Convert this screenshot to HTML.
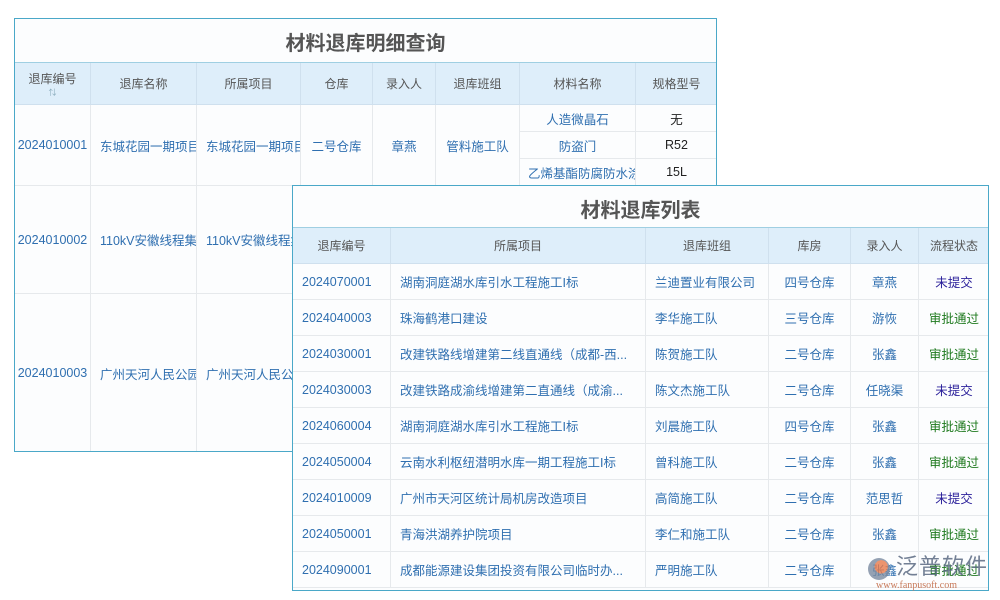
<!DOCTYPE html>
<html><head><meta charset="utf-8"><style>
*{margin:0;padding:0;box-sizing:border-box}
body{width:1000px;height:600px;background:#fff;position:relative;overflow:hidden;font-family:"Liberation Sans","Noto Sans CJK SC",sans-serif;font-size:12px}
.p{position:absolute;border:1px solid #4aa8c8;background:#fcfdfe;overflow:hidden}
.t{position:absolute;left:0;right:0;text-align:center;font-weight:bold;color:#555;font-size:20px}
.c{position:absolute;display:flex;align-items:center;justify-content:center;white-space:nowrap;overflow:hidden;border-right:1px solid #e6e9ec;border-bottom:1px solid #e6e9ec;color:#2f6fb0;font-size:12.5px}
.h{background:#deeefa;color:#555;border-color:#cfe0ee;font-size:12px}
.l{justify-content:flex-start;padding-left:9px}
.g{color:#1f7a1f}.u{color:#2a1f9a}.k{color:#222}
</style></head><body>
<div class="p" style="left:14px;top:18px;width:703px;height:434px">
<div class="t" style="top:8px">材料退库明细查询</div>
<div style="position:absolute;left:0;right:0;top:43px;height:1px;background:#9fcfe2"></div>
<div class="c h" style="left:0;top:44px;width:76px;height:42px;flex-direction:column">退库编号<span style="font-size:8px;color:#8ab">⇅</span></div>
<div class="c h" style="left:76px;top:44px;width:106px;height:42px">退库名称</div>
<div class="c h" style="left:182px;top:44px;width:104px;height:42px">所属项目</div>
<div class="c h" style="left:286px;top:44px;width:72px;height:42px">仓库</div>
<div class="c h" style="left:358px;top:44px;width:63px;height:42px">录入人</div>
<div class="c h" style="left:421px;top:44px;width:84px;height:42px">退库班组</div>
<div class="c h" style="left:505px;top:44px;width:116px;height:42px">材料名称</div>
<div class="c h" style="left:621px;top:44px;width:82px;height:42px">规格型号</div>

<div class="c" style="left:0;top:86px;width:76px;height:81px">2024010001</div>
<div class="c l" style="left:76px;top:86px;width:106px;height:81px">东城花园一期项目</div>
<div class="c l" style="left:182px;top:86px;width:104px;height:81px">东城花园一期项目</div>
<div class="c" style="left:286px;top:86px;width:72px;height:81px">二号仓库</div>
<div class="c" style="left:358px;top:86px;width:63px;height:81px">章燕</div>
<div class="c" style="left:421px;top:86px;width:84px;height:81px">管料施工队</div>
<div class="c" style="left:505px;top:86px;width:116px;height:27px">人造微晶石</div>
<div class="c k" style="left:621px;top:86px;width:82px;height:27px">无</div>
<div class="c" style="left:505px;top:113px;width:116px;height:27px">防盗门</div>
<div class="c k" style="left:621px;top:113px;width:82px;height:27px">R52</div>
<div class="c l" style="left:505px;top:140px;width:116px;height:27px;padding-left:8px">乙烯基酯防腐防水涂</div>
<div class="c k" style="left:621px;top:140px;width:82px;height:27px">15L</div>

<div class="c" style="left:0;top:167px;width:76px;height:108px">2024010002</div>
<div class="c l" style="left:76px;top:167px;width:106px;height:108px">110kV安徽线程集团</div>
<div class="c l" style="left:182px;top:167px;width:104px;height:108px">110kV安徽线程集团</div>
<div class="c" style="left:286px;top:167px;width:72px;height:108px"></div>
<div class="c" style="left:358px;top:167px;width:63px;height:108px"></div>
<div class="c" style="left:421px;top:167px;width:84px;height:108px"></div>
<div class="c" style="left:505px;top:167px;width:116px;height:108px"></div>

<div class="c" style="left:0;top:275px;width:76px;height:159px">2024010003</div>
<div class="c l" style="left:76px;top:275px;width:106px;height:159px">广州天河人民公园</div>
<div class="c l" style="left:182px;top:275px;width:104px;height:159px">广州天河人民公园</div>
</div>

<div class="p" style="left:292px;top:185px;width:697px;height:406px">
<div class="t" style="top:8px">材料退库列表</div>
<div style="position:absolute;left:0;right:0;top:41px;height:1px;background:#9fcfe2"></div>
<div class="c h" style="left:0;top:42px;width:98px;height:36px">退库编号</div>
<div class="c h" style="left:98px;top:42px;width:255px;height:36px">所属项目</div>
<div class="c h" style="left:353px;top:42px;width:123px;height:36px">退库班组</div>
<div class="c h" style="left:476px;top:42px;width:82px;height:36px">库房</div>
<div class="c h" style="left:558px;top:42px;width:68px;height:36px">录入人</div>
<div class="c h" style="left:626px;top:42px;width:71px;height:36px">流程状态</div>
<div id="rows"></div>
</div>
<div style="position:absolute;left:866px;top:553px;width:130px;height:44px;white-space:nowrap">
<div style="position:absolute;left:2px;top:5px;width:22px;height:22px;border-radius:50%;background:radial-gradient(circle at 60% 40%,#e87a4a 0 35%,#7a8aa0 36%);opacity:.8"></div>
<div style="position:absolute;left:30px;top:0px;font-size:22px;line-height:28px;color:#5a6a82;opacity:.85;letter-spacing:1px">泛普软件</div>
<div style="position:absolute;left:10px;top:27px;font-size:10px;color:#c87a5a;font-family:'Liberation Serif',serif">www.fanpusoft.com</div>
</div>
<script>
var d=[["2024070001","湖南洞庭湖水库引水工程施工I标","兰迪置业有限公司","四号仓库","章燕","未提交"],
["2024040003","珠海鹤港口建设","李华施工队","三号仓库","游恢","审批通过"],
["2024030001","改建铁路线增建第二线直通线（成都-西...","陈贺施工队","二号仓库","张鑫","审批通过"],
["2024030003","改建铁路成渝线增建第二直通线（成渝...","陈文杰施工队","二号仓库","任晓渠","未提交"],
["2024060004","湖南洞庭湖水库引水工程施工I标","刘晨施工队","四号仓库","张鑫","审批通过"],
["2024050004","云南水利枢纽潜明水库一期工程施工I标","曾科施工队","二号仓库","张鑫","审批通过"],
["2024010009","广州市天河区统计局机房改造项目","高简施工队","二号仓库","范思哲","未提交"],
["2024050001","青海洪湖养护院项目","李仁和施工队","二号仓库","张鑫","审批通过"],
["2024090001","成都能源建设集团投资有限公司临时办...","严明施工队","二号仓库","张鑫","审批通过"]];
var L=[0,98,353,476,558,626,697],h="";
d.forEach(function(r,i){var t=78+i*36;for(var j=0;j<6;j++){var cl="c"+(j<=2?" l":"")+(j==5?(r[5]=="未提交"?" u":" g"):"");h+='<div class="'+cl+'" style="left:'+L[j]+'px;top:'+t+'px;width:'+(L[j+1]-L[j])+'px;height:36px">'+r[j]+'</div>';}});
document.getElementById("rows").innerHTML=h;
</script>
</body></html>
